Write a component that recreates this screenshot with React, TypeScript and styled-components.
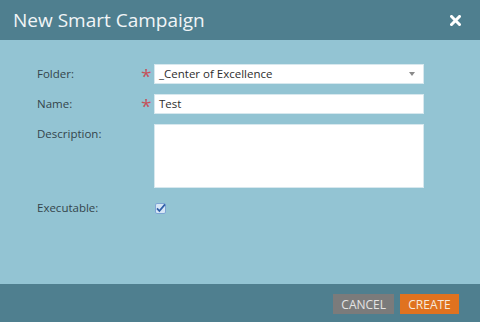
import React from "react";
import styled, { createGlobalStyle } from "styled-components";

const Global = createGlobalStyle`
  html, body { margin: 0; padding: 0; }
  body { font-family: "Open Sans", "Liberation Sans", sans-serif; }
  * { box-sizing: border-box; }
`;

const Dialog = styled.div`
  width: 480px;
  height: 322px;
  display: flex;
  flex-direction: column;
  background: #93c4d3;
`;

const Header = styled.div`
  height: 40px;
  flex: 0 0 40px;
  background: #4f7f8f;
  display: flex;
  align-items: center;
  justify-content: space-between;
  padding: 0 19px 0 13px;
`;

const Title = styled.h1`
  margin: 0;
  font-size: 19px;
  font-weight: 400;
  color: #f1f5f7;
`;

const CloseButton = styled.button`
  border: 0;
  background: none;
  padding: 0;
  width: 12px;
  height: 12px;
  display: flex;
  align-items: center;
  justify-content: center;
  cursor: pointer;
`;

const Body = styled.div`
  flex: 1;
  padding: 24px 0 0 37px;
`;

const Form = styled.div`
  display: grid;
  grid-template-columns: 103px 14px 270px;
  row-gap: 10px;
  align-items: start;
`;

const Label = styled.label`
  font-size: 11.5px;
  line-height: 20px;
  color: #33444b;
`;

const Required = styled.span`
  font-size: 19px;
  line-height: 24px;
  color: #c5525a;
  padding-left: 1px;
  height: 20px;
`;

const Spacer = styled.span``;

const Field = styled.div<{ $h?: number }>`
  height: ${(p) => p.$h ?? 20}px;
  background: #fff;
  border: 1px solid #d7e8ee;
  font-size: 11.5px;
  line-height: 18px;
  color: #2e2e2e;
  padding: 0 4px;
  display: flex;
  align-items: flex-start;
  justify-content: space-between;
`;

const Caret = styled.span`
  width: 0;
  height: 0;
  margin-top: 7px;
  margin-right: 4px;
  border-left: 3.5px solid transparent;
  border-right: 3.5px solid transparent;
  border-top: 4px solid #8a8a8a;
`;

const CheckCell = styled.div`
  height: 20px;
  display: flex;
  align-items: center;
  padding-left: 1px;
`;

const Footer = styled.div`
  height: 38px;
  flex: 0 0 38px;
  background: #4f7f8f;
  display: flex;
  justify-content: flex-end;
  align-items: flex-start;
  gap: 6px;
  padding: 10px 21px 0 0;
`;

const Button = styled.button<{ $primary?: boolean }>`
  height: 20px;
  border: 0;
  padding: 0 8px;
  min-width: 59px;
  font-family: "Open Sans", "Liberation Sans", sans-serif;
  font-size: 12px;
  color: ${(p) => (p.$primary ? "#f7e8dc" : "#e4e4e4")};
  background: ${(p) => (p.$primary ? "#e0721f" : "#7b7b7b")};
  text-transform: uppercase;
  cursor: pointer;
`;

export default function App() {
  return (
    <>
      <Global />
      <Dialog>
        <Header>
          <Title>New Smart Campaign</Title>
          <CloseButton aria-label="Close">
            <svg width="11" height="11" viewBox="0 0 11 11">
              <path d="M1.5 1.5 L9.5 9.5 M9.5 1.5 L1.5 9.5" stroke="#fff" strokeWidth="3" strokeLinecap="square" />
            </svg>
          </CloseButton>
        </Header>
        <Body>
          <Form>
            <Label>Folder:</Label>
            <Required>*</Required>
            <Field>
              <span>_Center of Excellence</span>
              <Caret />
            </Field>

            <Label>Name:</Label>
            <Required>*</Required>
            <Field>
              <span>Test</span>
            </Field>

            <Label>Description:</Label>
            <Spacer />
            <Field $h={64} />

            <Label>Executable:</Label>
            <Spacer />
            <CheckCell>
              <svg width="11" height="11" viewBox="0 0 11 11">
                <rect x="0.5" y="0.5" width="10" height="10" rx="1.5" fill="#d6e6f6" stroke="#7ea6d4" />
                <path d="M2 5.4 L4.4 8 L10 1.4" fill="none" stroke="#2f5fa8" strokeWidth="1.8" />
              </svg>
            </CheckCell>
          </Form>
        </Body>
        <Footer>
          <Button>Cancel</Button>
          <Button $primary>Create</Button>
        </Footer>
      </Dialog>
    </>
  );
}
